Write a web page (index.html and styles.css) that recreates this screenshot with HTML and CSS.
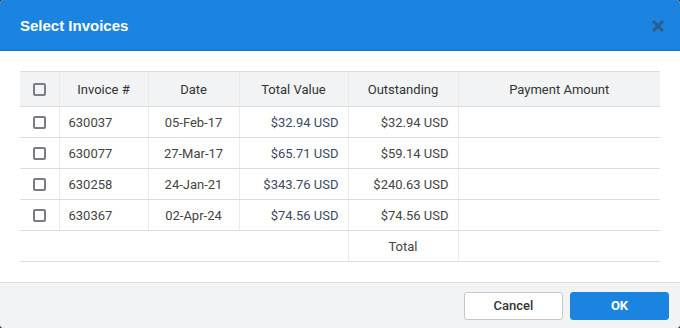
FILE: index.html
```html
<!DOCTYPE html>
<html lang="en">
<head>
  <meta charset="UTF-8" />
  <title>Select Invoices</title>
  <link rel="stylesheet" href="styles.css">
</head>
<body>
  <div class="dialog">
    <header class="dialog-header">
      <div class="dialog-title">Select Invoices</div>
      <span class="close-btn">
        <svg width="12" height="12" viewBox="0 0 12 12">
          <path d="M2 2 L10 10 M10 2 L2 10" stroke="#2a5d90" stroke-width="3" stroke-linecap="square" />
        </svg>
      </span>
    </header>

    <div class="dialog-body">
      <table class="invoices">
        <colgroup>
          <col class="w-check">
          <col class="w-inv">
          <col class="w-date">
          <col class="w-total">
          <col class="w-out">
          <col class="w-pay">
        </colgroup>
        <thead>
          <tr>
            <th class="col-check"><span class="checkbox"></span></th>
            <th>Invoice #</th>
            <th>Date</th>
            <th>Total Value</th>
            <th>Outstanding</th>
            <th>Payment Amount</th>
          </tr>
        </thead>
        <tbody>
          <tr>
            <td class="col-check"><span class="checkbox"></span></td>
            <td class="inv">630037</td>
            <td class="date">05-Feb-17</td>
            <td class="money total">$32.94 USD</td>
            <td class="money">$32.94 USD</td>
            <td></td>
          </tr>
          <tr>
            <td class="col-check"><span class="checkbox"></span></td>
            <td class="inv">630077</td>
            <td class="date">27-Mar-17</td>
            <td class="money total">$65.71 USD</td>
            <td class="money">$59.14 USD</td>
            <td></td>
          </tr>
          <tr>
            <td class="col-check"><span class="checkbox"></span></td>
            <td class="inv">630258</td>
            <td class="date">24-Jan-21</td>
            <td class="money total">$343.76 USD</td>
            <td class="money">$240.63 USD</td>
            <td></td>
          </tr>
          <tr>
            <td class="col-check"><span class="checkbox"></span></td>
            <td class="inv">630367</td>
            <td class="date">02-Apr-24</td>
            <td class="money total">$74.56 USD</td>
            <td class="money">$74.56 USD</td>
            <td></td>
          </tr>
          <tr class="total-row">
            <td colspan="4" class="blank"></td>
            <td class="total-label">Total</td>
            <td></td>
          </tr>
        </tbody>
      </table>
    </div>

    <div class="dialog-footer">
      <button class="btn btn-cancel">Cancel</button>
      <button class="btn btn-ok">OK</button>
    </div>
  </div>
</body>
</html>
```

FILE: styles.css
```css
html, body {
  margin: 0;
  padding: 0;
}

body {
  background: #3a3a3a;
  font-family: Roboto, 'Noto Sans', sans-serif;
  width: 680px;
  height: 328px;
  overflow: hidden;
}

.dialog {
  width: 680px;
  height: 328px;
  background: #fff;
  border-radius: 4px;
  overflow: hidden;
  display: flex;
  flex-direction: column;
}

.dialog-header {
  height: 51px;
  background: #1a84e0;
  border-bottom: 1px solid #1670c4;
  box-sizing: border-box;
  display: flex;
  align-items: center;
  justify-content: space-between;
  padding: 0 16px 0 20px;
}

.dialog-title {
  color: #fff;
  font-family: 'Liberation Sans', Arial, sans-serif;
  font-weight: bold;
  font-size: 15px;
  margin-top: 1px;
}

.close-btn {
  display: flex;
  width: 12px;
  height: 12px;
  margin-top: 1px;
}

.dialog-body {
  flex: 1;
  padding: 20px 20px 0 20px;
}

.invoices {
  width: 640px;
  border-collapse: collapse;
  table-layout: fixed;
  font-size: 13px;
  color: #444;
}

.w-check { width: 39px; }
.w-inv { width: 89px; }
.w-date { width: 91px; }
.w-total { width: 109px; }
.w-out { width: 110px; }
.w-pay { width: 202px; }

.invoices th,
.invoices td {
  border-bottom: 1px solid #dcdcdc;
  border-left: 1px solid #ebebeb;
  padding: 0 9px;
  white-space: nowrap;
}

.invoices th:first-child,
.invoices td:first-child {
  border-left: none;
}

.invoices thead tr {
  height: 35px;
  background: #f2f3f5;
}

.invoices thead th {
  border-top: 1px solid #dcdcdc;
  font-weight: 400;
  color: #333;
  text-align: center;
}

.invoices tbody tr {
  height: 31px;
}

.invoices .col-check {
  padding: 0;
  text-align: center;
}

.checkbox {
  display: inline-block;
  width: 9px;
  height: 9px;
  border: 2px solid #7b7b85;
  border-radius: 2px;
  vertical-align: middle;
  margin-top: -2px;
}

.inv {
  text-align: left;
}

.date {
  text-align: center;
}

.money {
  text-align: right;
}

.money.total {
  color: #3b4a62;
}

.total-row .blank {
  border-left: none;
}

.total-label {
  text-align: center;
}

.dialog-footer {
  height: 46px;
  box-sizing: border-box;
  background: #f2f3f5;
  border-top: 1px solid #dcdde0;
  display: flex;
  justify-content: flex-end;
  align-items: center;
  gap: 7px;
  padding: 0 11px 0 0;
}

.btn {
  width: 99px;
  height: 28px;
  border-radius: 3px;
  font-family: Roboto, 'Noto Sans', sans-serif;
  font-size: 13px;
  font-weight: 500;
  cursor: pointer;
}

.btn-cancel {
  background: #fff;
  border: 1px solid #c8c8c8;
  color: #333;
}

.btn-ok {
  background: #1a84e0;
  border: 1px solid #1a84e0;
  color: #fff;
  font-weight: bold;
}
```
